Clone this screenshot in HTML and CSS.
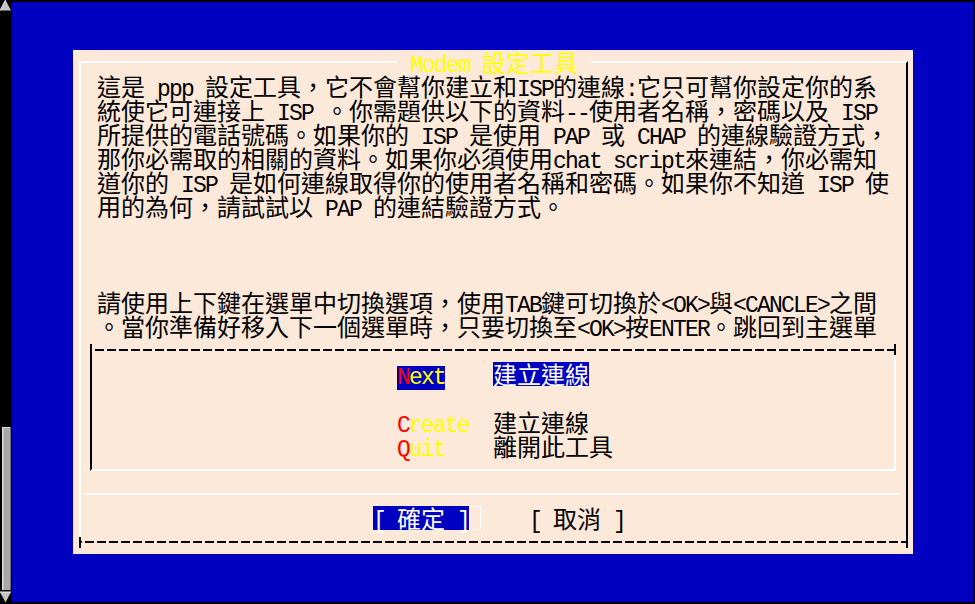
FILE: index.html
```html
<!DOCTYPE html>
<html lang="zh-Hant">
<head>
<meta charset="utf-8">
<title>Modem 設定工具</title>
<link rel="stylesheet" href="styles.css">
</head>
<body>
<div class="screen">
  <svg class="scrollbar" width="12" height="604" viewBox="0 0 12 604">
    <rect width="12" height="604" fill="#000"/>
    <polygon points="0,10.5 5.5,0 11,10.5" fill="#c4c4c4"/>
    <polyline points="0,10.5 5.5,0" stroke="#f0f0f0" stroke-width="1" fill="none"/>
    <rect x="2" y="427" width="9" height="163" fill="#a9a9a9"/>
    <rect x="2" y="427" width="1.5" height="163" fill="#dcdcdc"/>
    <rect x="2" y="427" width="9" height="1" fill="#dcdcdc"/>
    <rect x="10" y="427" width="1" height="163" fill="#6e6e6e"/>
    <polygon points="0,592 11,592 5.5,602.5" fill="#c4c4c4"/>
    <polyline points="0,592 11,592" stroke="#f0f0f0" stroke-width="1" fill="none"/>
  </svg>
  <div class="term">
    <div class="dialog">
      <div class="frame">
        <div class="title"><span class="title-text"><span class="a">Modem </span>設定工具</span></div>
        <div class="body">
          <div class="ln">這是<span class="a"> ppp </span>設定工具<span class="p">，</span>它不會幫你建立和<span class="a">ISP</span>的連線<span class="a">:</span>它只可幫你設定你的系</div>
          <div class="ln">統使它可連接上<span class="a"> ISP </span><span class="p">。</span>你需題供以下的資料<span class="a">--</span>使用者名稱<span class="p">，</span>密碼以及<span class="a"> ISP</span></div>
          <div class="ln">所提供的電話號碼<span class="p">。</span>如果你的<span class="a"> ISP </span>是使用<span class="a"> PAP </span>或<span class="a"> CHAP </span>的連線驗證方式<span class="p">，</span></div>
          <div class="ln">那你必需取的相關的資料<span class="p">。</span>如果你必須使用<span class="a">chat script</span>來連結<span class="p">，</span>你必需知</div>
          <div class="ln">道你的<span class="a"> ISP </span>是如何連線取得你的使用者名稱和密碼<span class="p">。</span>如果你不知道<span class="a"> ISP </span>使</div>
          <div class="ln">用的為何<span class="p">，</span>請試試以<span class="a"> PAP </span>的連結驗證方式<span class="p">。</span></div>
          <div class="ln"></div>
          <div class="ln"></div>
          <div class="ln"></div>
          <div class="ln">請使用上下鍵在選單中切換選項<span class="p">，</span>使用<span class="a">TAB</span>鍵可切換於<span class="a">&lt;OK&gt;</span>與<span class="a">&lt;CANCLE&gt;</span>之間</div>
          <div class="ln"><span class="p">。</span>當你準備好移入下一個選單時<span class="p">，</span>只要切換至<span class="a">&lt;OK&gt;</span>按<span class="a">ENTER</span><span class="p">。</span>跳回到主選單</div>
        </div>
        <div class="menu">
          <div class="item">
            <span class="tag"><span class="a hl"><span class="hot">N</span>ext</span></span>
            <span class="desc hl-desc">建立連線</span>
          </div>
          <div class="item"></div>
          <div class="item">
            <span class="tag"><span class="a"><span class="hot">C</span>reate</span></span>
            <span class="desc">建立連線</span>
          </div>
          <div class="item">
            <span class="tag"><span class="a"><span class="hot">Q</span>uit</span></span>
            <span class="desc">離開此工具</span>
          </div>
        </div>
        <div class="sep"></div>
        <div class="buttons">
          <span class="btn btn-sel"><span class="a">[ </span>確定<span class="a"> ]</span></span>
          <span class="cursor"></span>
          <span class="btn btn-cancel"><span class="a">[ </span>取消<span class="a"> ]</span></span>
        </div>
      </div>
    </div>
  </div>
</div>
</body>
</html>
```

FILE: styles.css
```css
html, body {
  margin: 0;
  padding: 0;
  background: #000;
  overflow: hidden;
}

.screen {
  display: flex;
  width: 975px;
  height: 604px;
  background: #000;
  font: 24px/24px "Noto Sans CJK TC", "Noto Sans CJK JP", sans-serif;
  color: #000;
}

.scrollbar {
  display: block;
  flex: none;
}

.term {
  width: 961px;
  height: 600px;
  margin-top: 2px;
  background: #0000c0;
  flex: none;
}

.dialog {
  display: flex;
  flex-direction: column;
  box-sizing: border-box;
  width: 840px;
  height: 504px;
  margin: 48px 0 0 61px;
  padding: 11px 5px 11px 6px;
  background: #fde9d9;
}

.frame {
  position: relative;
  flex: 1;
  border-top: 2px solid #fff;
  border-left: 2px solid #fff;
  border-right: 2px solid #000;
  background: linear-gradient(90deg, #000 9px, transparent 9px) 6px 100% / 12px 2px repeat-x;
  background-origin: border-box;
}

/* "+" corner ticks of the outer box (bottom corners) */
.frame::before,
.frame::after {
  content: "";
  position: absolute;
  bottom: -5px;
  width: 2px;
  height: 11px;
  background: #000;
}

.frame::before {
  left: -2px;
}

.frame::after {
  right: -2px;
}

.a {
  font: 23px/24px "Liberation Mono", "DejaVu Sans Mono", monospace;
  letter-spacing: -1.8px;
}

.p {
  font-family: "Noto Sans CJK JP", "Noto Sans CJK TC", sans-serif;
}

.title {
  height: 24px;
  margin-top: -13px;
  text-align: center;
  white-space: pre;
}

.title-text {
  display: inline-block;
  height: 24px;
  padding: 0 12px 0 13px;
  background: #fde9d9;
  color: #ffff00;
}

.body {
  padding-left: 16px;
}

.ln {
  height: 24px;
  white-space: pre;
}

.menu {
  position: relative;
  box-sizing: border-box;
  height: 122px;
  margin: 11px 10px 0 9px;
  padding: 13px 0 0 305px;
  border-left: 2px solid #000;
  border-right: 2px solid #fff;
  border-bottom: 2px solid #fff;
  background: linear-gradient(90deg, #000 9px, transparent 9px) 5px 0 / 12px 2px repeat-x;
  background-origin: border-box;
}

/* "+" corner ticks of the menu box (top corners, dark) */
.menu::before,
.menu::after {
  content: "";
  position: absolute;
  top: -5px;
  width: 2px;
  height: 11px;
  background: #000;
}

.menu::before {
  left: -2px;
}

.menu::after {
  right: -2px;
}

.item {
  display: flex;
  height: 24px;
  white-space: pre;
}

.tag {
  width: 96px;
  flex: none;
  color: #ffff00;
}

.hot {
  color: #ff0000;
}

.hl {
  display: inline-block;
  height: 24px;
  background: #0000c0;
}

.desc {
  height: 24px;
}

.hl-desc {
  background: #0000c0;
  color: #fff;
}

.sep {
  height: 2px;
  margin: 22px 6px 0 4px;
  background: #fff;
}

.buttons {
  display: flex;
  height: 24px;
  margin-top: 11px;
  padding-left: 292px;
  white-space: pre;
}

.btn {
  width: 96px;
  height: 24px;
  flex: none;
}

.btn-sel {
  background: #0000c0;
  color: #fff;
}

.cursor {
  box-sizing: border-box;
  width: 12px;
  height: 24px;
  border: 1px solid #fff;
  flex: none;
}

.btn-cancel {
  margin-left: 48px;
}
```
